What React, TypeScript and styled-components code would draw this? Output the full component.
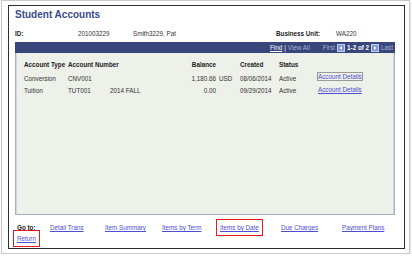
import React from "react";
import styled, { createGlobalStyle } from "styled-components";

const GlobalStyle = createGlobalStyle`
  html, body {
    margin: 0;
    padding: 0;
    background: #fff;
  }
  body {
    font-family: "Liberation Sans", Arial, sans-serif;
    color: #222;
  }
`;

const accounts = [
  {
    type: "Conversion",
    number: "CNV001",
    term: "",
    balance: "1,180.66",
    currency: "USD",
    created: "08/06/2014",
    status: "Active",
    focused: true,
  },
  {
    type: "Tuition",
    number: "TUT001",
    term: "2014 FALL",
    balance: "0.00",
    currency: "",
    created: "09/29/2014",
    status: "Active",
    focused: false,
  },
];

const goToLinks = [
  { label: "Detail Trans", width: 55 },
  { label: "Item Summary", width: 57 },
  { label: "Items by Term", width: 58 },
  { label: "Items by Date", width: 61, marked: true },
  { label: "Due Charges", width: 61 },
  { label: "Payment Plans", width: 0 },
];

const NavIcon = ({ dir }: { dir: "left" | "right" }) => (
  <svg width="8" height="8" viewBox="0 0 8 8">
    <rect x="0.5" y="0.5" width="7" height="7" fill="#7b97d6" stroke="#c0cdee" />
    {dir === "left" ? (
      <path d="M5 2 L2.5 4 L5 6 Z" fill="#fff" />
    ) : (
      <path d="M3 2 L5.5 4 L3 6 Z" fill="#fff" />
    )}
  </svg>
);

const App = () => {
  return (
    <>
      <GlobalStyle />
      <Frame>
        <Page>
          <Title>Student Accounts</Title>
          <InfoRow>
            <InfoLabel width={63}>ID:</InfoLabel>
            <InfoValue width={55}>201003229</InfoValue>
            <InfoValue width={143}>Smith3229, Pat</InfoValue>
            <InfoLabel width={60}>Business Unit:</InfoLabel>
            <InfoValue width={0}>WA220</InfoValue>
          </InfoRow>
          <Grid>
            <GridBar>
              <BarLink>Find</BarLink>
              <BarText light={false}>|</BarText>
              <BarText light>View All</BarText>
              <BarSpacer />
              <BarText light>First</BarText>
              <NavIcon dir="left" />
              <BarCount>1-2 of 2</BarCount>
              <NavIcon dir="right" />
              <BarText light>Last</BarText>
            </GridBar>
            <GridBody>
              <HeadRow>
                <Cell>Account Type</Cell>
                <Cell>Account Number</Cell>
                <Cell />
                <Cell right>Balance</Cell>
                <Cell />
                <Cell>Created</Cell>
                <Cell>Status</Cell>
                <Cell />
              </HeadRow>
              {accounts.map((a) => (
                <DataRow key={a.number}>
                  <Cell>{a.type}</Cell>
                  <Cell>{a.number}</Cell>
                  <Cell>{a.term}</Cell>
                  <Cell right>{a.balance}</Cell>
                  <Cell indent>{a.currency}</Cell>
                  <Cell>{a.created}</Cell>
                  <Cell>{a.status}</Cell>
                  <DetailsLink focused={a.focused}>Account Details</DetailsLink>
                </DataRow>
              ))}
            </GridBody>
          </Grid>
          <Footer>
            <GoToRow>
              <GoToLabel>Go to:</GoToLabel>
              {goToLinks.map((l) => (
                <LinkCell key={l.label} width={l.width}>
                  <PageLink marked={!!l.marked}>{l.label}</PageLink>
                </LinkCell>
              ))}
            </GoToRow>
            <ReturnRow>
              <PageLink marked>Return</PageLink>
            </ReturnRow>
          </Footer>
        </Page>
      </Frame>
    </>
  );
};

export default App;

const Frame = styled.div`
  box-sizing: border-box;
  width: 409px;
  height: 254px;
  margin-left: 1px;
  padding: 4px 4px 4px 6px;
  border: 1px solid #c8c8c8;
  background: #fff;
  box-shadow: 1px 2px 2px rgba(0, 0, 0, 0.12);
`;

const Page = styled.div`
  box-sizing: border-box;
  height: 100%;
  border: 1px solid #2e2e2e;
  padding: 0 0 0 6px;
  display: flex;
  flex-direction: column;
`;

const Title = styled.div`
  margin-top: 3px;
  font-size: 10px;
  line-height: 12px;
  font-weight: bold;
  color: #3a4a88;
`;

const InfoRow = styled.div`
  display: flex;
  margin-top: 9px;
  font-size: 6.3px;
  line-height: 8px;
`;

const InfoLabel = styled.span<{ width: number }>`
  width: ${({ width }) => (width ? `${width}px` : "auto")};
  font-weight: bold;
  color: #222;
`;

const InfoValue = styled.span<{ width: number }>`
  width: ${({ width }) => (width ? `${width}px` : "auto")};
  color: #333;
`;

const Grid = styled.div`
  width: 380px;
  margin-top: 4px;
  display: flex;
  flex-direction: column;
`;

const GridBar = styled.div`
  height: 11px;
  background: #38467b;
  display: flex;
  align-items: center;
  justify-content: flex-end;
  gap: 2px;
  padding-right: 2px;
  font-size: 6.3px;
`;

const BarLink = styled.span`
  color: #fff;
  text-decoration: underline;
`;

const BarText = styled.span<{ light: boolean }>`
  color: ${({ light }) => (light ? "#a9b3d6" : "#fff")};
`;

const BarSpacer = styled.span`
  width: 9px;
`;

const BarCount = styled.span`
  color: #fff;
  font-weight: bold;
`;

const GridBody = styled.div`
  box-sizing: border-box;
  height: 162px;
  padding-left: 8px;
  background: #eef0ea;
  border: 1px solid #a6adc5;
  border-top: none;
  box-shadow: inset 1px 0 #d2d6e0, inset -1px 0 #d2d6e0;
  font-size: 6.3px;
`;

const columns = "44px 42px 64px 42px 24px 39px 39px auto";

const HeadRow = styled.div`
  display: grid;
  grid-template-columns: ${columns};
  align-items: center;
  height: 10px;
  margin-top: 6px;
  margin-bottom: 3px;
  font-weight: bold;
  color: #222;
`;

const DataRow = styled.div`
  display: grid;
  grid-template-columns: ${columns};
  align-items: center;
  height: 12px;
  color: #333;
`;

const Cell = styled.span<{ right?: boolean; indent?: boolean }>`
  white-space: nowrap;
  text-align: ${({ right }) => (right ? "right" : "left")};
  padding-left: ${({ indent }) => (indent ? "3px" : "0")};
`;

const DetailsLink = styled.span<{ focused: boolean }>`
  justify-self: start;
  white-space: nowrap;
  color: #4c4fd0;
  text-decoration: underline;
  line-height: 7px;
  margin-top: ${({ focused }) => (focused ? "-4px" : "-1px")};
  outline: ${({ focused }) => (focused ? "1px solid #9a9a9a" : "none")};
`;

const Footer = styled.div`
  margin-top: 8px;
  padding-left: 2px;
  font-size: 6.3px;
  line-height: 9px;
`;

const GoToRow = styled.div`
  display: flex;
`;

const GoToLabel = styled.span`
  width: 33px;
  font-weight: bold;
  color: #222;
`;

const LinkCell = styled.span<{ width: number }>`
  width: ${({ width }) => (width ? `${width}px` : "auto")};
  white-space: nowrap;
`;

const PageLink = styled.span<{ marked: boolean }>`
  display: inline-block;
  color: #4c4fd0;
  text-decoration: underline;
  padding: ${({ marked }) => (marked ? "3px 3px" : "0")};
  margin: ${({ marked }) => (marked ? "-3px -3px" : "0")};
  outline: ${({ marked }) => (marked ? "1.5px solid #e41b1b" : "none")};
`;

const ReturnRow = styled.div`
  margin-top: 2px;
`;
